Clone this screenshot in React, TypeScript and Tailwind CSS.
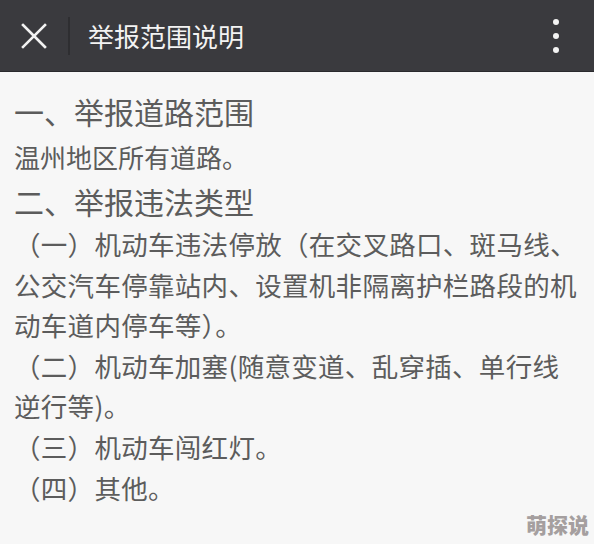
import React from "react";

export default function App() {
  const font = { fontFamily: '"Noto Sans CJK SC", "Noto Sans", sans-serif' };
  return (
    <div className="w-[594px] h-[544px] bg-[#f7f7f7] overflow-hidden relative" style={font}>
      <div className="h-[72px] bg-[#3a3a3e] border-b border-[#2a2a2d] flex items-center">
        <div className="w-[68px] flex items-center justify-center">
          <svg width="26" height="26" viewBox="0 0 26 26">
            <path d="M2 2 L24 24 M24 2 L2 24" stroke="#f2f2f2" strokeWidth="2.6" strokeLinecap="square" />
          </svg>
        </div>
        <div className="w-[2px] h-[38px] bg-[#2e2e31]" />
        <div className="ml-[18px] text-[26px] text-[#f3f3f3] leading-none flex-1">举报范围说明</div>
        <div className="w-[60px] flex flex-col items-center gap-[8px] mr-[8px]">
          <div className="w-[6px] h-[6px] rounded-full bg-[#f3f3f3]" />
          <div className="w-[6px] h-[6px] rounded-full bg-[#f3f3f3]" />
          <div className="w-[6px] h-[6px] rounded-full bg-[#f3f3f3]" />
        </div>
      </div>
      <div className="pl-[14px] pr-[16px] pt-[17px] text-[#5c5c5c]">
        <div className="text-[30px] leading-[45px]">一、举报道路范围</div>
        <div className="text-[26px] leading-[45px]">温州地区所有道路。</div>
        <div className="text-[30px] leading-[45px]">二、举报违法类型</div>
        <div className="text-[26.5px] leading-[40.6px] tracking-[0.3px]">
          （一）机动车违法停放（在交叉路口、斑马线、公交汽车停靠站内、设置机非隔离护栏路段的机动车道内停车等）。
        </div>
        <div className="text-[26.5px] leading-[40.6px] tracking-[0.3px]">
          （二）机动车加塞(随意变道、乱穿插、单行线逆行等)。
        </div>
        <div className="text-[26.5px] leading-[40.6px] tracking-[0.3px]">（三）机动车闯红灯。</div>
        <div className="text-[26.5px] leading-[40.6px] tracking-[0.3px]">（四）其他。</div>
      </div>
      <div className="absolute right-[5px] bottom-[9px] text-[21px] font-black text-[#a59f9f] leading-none">萌探说</div>
    </div>
  );
}
